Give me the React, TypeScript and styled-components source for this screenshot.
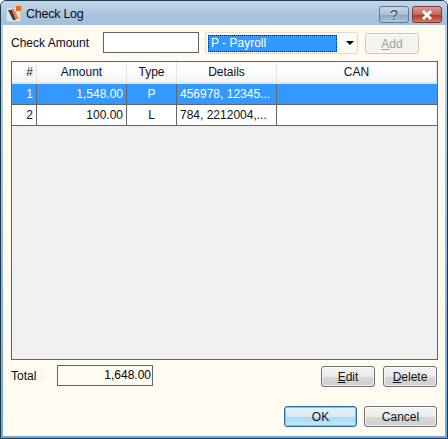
import React from "react";
import styled, { createGlobalStyle } from "styled-components";

const Global = createGlobalStyle`
  html, body { margin: 0; padding: 0; background: #fff; }
  * { box-sizing: border-box; }
`;

const Window = styled.div`
  width: 448px;
  height: 439px;
  display: flex;
  flex-direction: column;
  background: linear-gradient(#a9c3db, #b9d1e6 30px, #6fa8d8);
  border: 1px solid #1d3a4c;
  border-radius: 6px 6px 0 0;
  font-family: "Liberation Sans", Arial, sans-serif;
  font-size: 12px;
  color: #000;
  overflow: hidden;
`;

const TitleBar = styled.div`
  height: 24px;
  flex: none;
  display: flex;
  align-items: center;
  padding: 2px 5px 0 5px;
  background: linear-gradient(#c4d6e8, #a9c4de 60%, #a3c0dc);
`;

const TitleText = styled.span`
  font-size: 12.5px;
  letter-spacing: -0.25px;
  margin-left: 4px;
  color: #0a0a14;
  flex: 1;
`;

const CaptionBtn = styled.div<{ $close?: boolean }>`
  height: 17px;
  width: 30px;
  margin-left: ${(p) => (p.$close ? "3px" : "0")};
  margin-top: 1px;
  border: 1px solid ${(p) => (p.$close ? "#7a3a36" : "#5f7b93")};
  border-radius: 3px;
  display: flex;
  align-items: center;
  justify-content: center;
  font-size: 15px;
  color: #3a4c60;
  text-shadow: 0 0 2px #fff;
  background: ${(p) =>
    p.$close
      ? "linear-gradient(#dd9c90, #c7665b 50%, #b0382c 55%, #cf7a68)"
      : "linear-gradient(#c5d6e6, #a9c0d6 50%, #8aa8c4 55%, #adc6dc)"};
`;

const Body = styled.div`
  flex: 1;
  margin: 0 2px 2px 2px;
  background: #fffbf0;
  display: flex;
  flex-direction: column;
  padding: 7px 7px 8px 8px;
`;

const TopRow = styled.div`
  display: flex;
  align-items: flex-start;
  height: 22px;
`;

const Label = styled.span<{ $w: number }>`
  width: ${(p) => p.$w}px;
  flex: none;
  line-height: 22px;
  color: #0a0a1e;
`;

const TextBox = styled.div<{ $w: number }>`
  width: ${(p) => p.$w}px;
  height: 21px;
  flex: none;
  border: 1px solid #646464;
  text-align: right;
  line-height: 19px;
  padding-right: 1px;
`;

const WhiteBox = styled(TextBox)`
  background: #fff;
`;

const Combo = styled.div`
  width: 153px;
  height: 22px;
  margin-left: 6px;
  flex: none;
  display: flex;
  align-items: center;
  padding: 2px;
  border: 1px solid #dedcd2;
  background: #fdfcf6;
  border-radius: 2px;
`;

const ComboValue = styled.div`
  width: 129px;
  height: 17px;
  background: #3399ff;
  color: #fff;
  outline: 1px dotted #111;
  outline-offset: -1px;
  padding-left: 3px;
  line-height: 16px;
`;

const ComboArrow = styled.div`
  margin-left: 9px;
  width: 0;
  height: 0;
  border-left: 4px solid transparent;
  border-right: 4px solid transparent;
  border-top: 4px solid #000;
`;

const Btn = styled.div<{ $w?: number; $disabled?: boolean; $default?: boolean }>`
  width: ${(p) => p.$w ?? 54}px;
  height: 21px;
  flex: none;
  display: flex;
  align-items: center;
  justify-content: center;
  border-radius: 3px;
  border: 1px solid ${(p) => (p.$disabled ? "#c6c6c0" : p.$default ? "#2c6f9c" : "#707070")};
  color: ${(p) => (p.$disabled ? "#a0a0a0" : "#111")};
  background: ${(p) =>
    p.$disabled
      ? "#f4f3ed"
      : p.$default
        ? "linear-gradient(#e6f4fb, #d3ecf9 50%, #a9daf4 55%, #c4e6f8)"
        : "linear-gradient(#f4f4f4, #ebebeb 50%, #d6d6d6 55%, #d0d0d0)"};
  box-shadow: ${(p) => (p.$default ? "inset 0 0 0 1px #60d0f0" : "inset 0 0 0 1px rgba(255,255,255,.6)")};
  u { text-underline-offset: 1px; }
`;

const AddBtn = styled(Btn)`
  margin-left: 7px;
  margin-top: 1px;
`;

const Table = styled.div`
  margin-top: 7px;
  height: 299px;
  flex: none;
  border: 1px solid #646464;
  background: #f0f0f0;
  display: flex;
  flex-direction: column;
`;

const columns = "25px 90px 50px 100px 1fr";

const HeaderRow = styled.div`
  display: grid;
  grid-template-columns: ${columns};
  height: 22px;
  background: linear-gradient(#ffffff, #fbfbfb 50%, #f3f4f5);
  border-bottom: 2px solid #e3e4e6;
`;

const HeaderCell = styled.div<{ $right?: boolean }>`
  text-align: ${(p) => (p.$right ? "right" : "center")};
  padding-right: ${(p) => (p.$right ? "3px" : "0")};
  line-height: 21px;
  color: #10102a;
  border-right: 1px solid #e3e4e6;
`;

const DataRow = styled.div<{ $selected?: boolean }>`
  display: grid;
  grid-template-columns: ${columns};
  height: 21px;
  background: ${(p) => (p.$selected ? "#3399ff" : "#fff")};
  color: ${(p) => (p.$selected ? "#fff" : "#111")};
  border-bottom: 1px solid #646464;
`;

const Cell = styled.div<{ $align?: string }>`
  text-align: ${(p) => p.$align ?? "left"};
  padding: 0 3px;
  line-height: 20px;
  white-space: nowrap;
  overflow: hidden;
  border-right: 1px solid #646464;
  &:last-child { border-right: 0; }
`;

const TotalRow = styled.div`
  margin-top: 5px;
  display: flex;
  align-items: flex-start;
  height: 22px;
`;

const Spacer = styled.div`
  flex: 1;
`;

const BottomRow = styled.div`
  margin-top: 19px;
  display: flex;
  justify-content: flex-end;
  gap: 7px;
  padding-right: 1px;
`;

const EditRow = styled.div`
  display: flex;
  gap: 8px;
  margin-top: 1px;
  padding-right: 1px;
`;

const rows = [
  { n: 1, amount: "1,548.00", type: "P", details: "456978, 12345...", selected: true },
  { n: 2, amount: "100.00", type: "L", details: "784, 2212004,...", selected: false },
];

function AppIcon() {
  return (
    <svg width="16" height="16" viewBox="0 0 16 16">
      <rect x="0.5" y="1.5" width="14" height="14" fill="#dfe2e6" stroke="#c2ccd6" />
      <path d="M2 4 L6 4 L10 14 L7 14 Z" fill="#3a3c42" />
      <path d="M5 3 L8 3 L13 13 L10 13 Z" fill="#ea6d24" opacity="0.85" />
      <rect x="10" y="0" width="5" height="5" fill="#f26a10" />
    </svg>
  );
}

export default function App() {
  return (
    <>
      <Global />
      <Window>
        <TitleBar>
          <AppIcon />
          <TitleText>Check Log</TitleText>
          <CaptionBtn>?</CaptionBtn>
          <CaptionBtn $close>
            <svg width="14" height="10" viewBox="0 0 14 10">
              <path d="M3 1 L11 9 M11 1 L3 9" stroke="#fff" strokeWidth="2.8" />
            </svg>
          </CaptionBtn>
        </TitleBar>
        <Body>
          <TopRow>
            <Label $w={92}>Check Amount</Label>
            <WhiteBox $w={96} />
            <Combo>
              <ComboValue>P - Payroll</ComboValue>
              <ComboArrow />
            </Combo>
            <AddBtn $disabled><span><u>A</u>dd</span></AddBtn>
          </TopRow>
          <Table>
            <HeaderRow>
              <HeaderCell $right>#</HeaderCell>
              <HeaderCell>Amount</HeaderCell>
              <HeaderCell>Type</HeaderCell>
              <HeaderCell>Details</HeaderCell>
              <HeaderCell>CAN</HeaderCell>
            </HeaderRow>
            {rows.map((r) => (
              <DataRow key={r.n} $selected={r.selected}>
                <Cell $align="right">{r.n}</Cell>
                <Cell $align="right">{r.amount}</Cell>
                <Cell $align="center">{r.type}</Cell>
                <Cell>{r.details}</Cell>
                <Cell />
              </DataRow>
            ))}
          </Table>
          <TotalRow>
            <Label $w={46}>Total</Label>
            <TextBox $w={96}>1,648.00</TextBox>
            <Spacer />
            <EditRow>
              <Btn><span><u>E</u>dit</span></Btn>
              <Btn><span><u>D</u>elete</span></Btn>
            </EditRow>
          </TotalRow>
          <BottomRow>
            <Btn $w={73} $default>OK</Btn>
            <Btn $w={73}>Cancel</Btn>
          </BottomRow>
        </Body>
      </Window>
    </>
  );
}
